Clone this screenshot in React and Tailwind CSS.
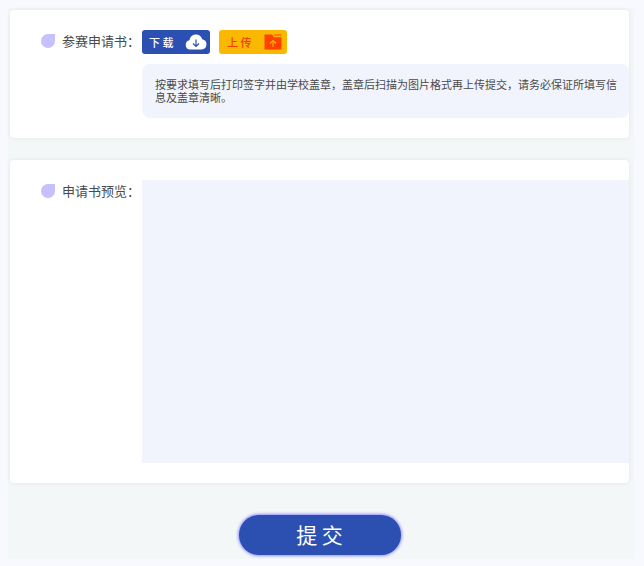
function DropMark() {
  return (
    <span
      aria-hidden="true"
      className="size-3.5 shrink-0 rounded-full rounded-tr-none bg-[#c6c0fd]"
    />
  );
}

function CloudDownloadIcon() {
  return (
    <svg viewBox="0 0 22 16" className="h-4 w-[22px]" aria-hidden="true">
      <path
        d="M5.2 15.5a4.7 4.7 0 0 1-.7-9.3C5.2 2.700 7.700.6 10.900.6c3.100 0 5.500 1.700 6.300 4.600a5.200 5.200 0 0 1-.6 10.300z"
        fill="#fff"
      />
      <path
        d="M11 5.500v7M8 9.500l3 3 3-3"
        fill="none"
        stroke="#2b50b1"
        strokeWidth="1.200"
      />
    </svg>
  );
}

function FolderUploadIcon() {
  return (
    <svg viewBox="0 0 18 16" className="h-4 w-[18px]" aria-hidden="true">
      <path d="M.5.5h7.500l2 2.800h7.500v12.200H.5z" fill="#ff4200" />
      <path d="M10 1h7.500" stroke="#ff4200" strokeWidth="1" />
      <path
        d="M9 13V7M6 9.500l3-3 3 3"
        fill="none"
        stroke="#fbb800"
        strokeWidth="1.100"
      />
    </svg>
  );
}

function Card({ label, children }) {
  return (
    <section className="flex rounded bg-white py-5 pl-[31px] shadow-[0_0_4px_rgba(0,0,0,0.08)]">
      <div className="flex h-[22px] w-[101px] shrink-0 items-center gap-[7px]">
        <DropMark />
        <h2 className="text-[13px] whitespace-nowrap">{label}</h2>
      </div>
      <div className="min-w-0 flex-1">{children}</div>
    </section>
  );
}

export default function App() {
  return (
    <div className="bg-[#f8f9ff] py-2 pr-2.5 pl-2 font-['Noto_Sans_CJK_SC',sans-serif] text-[#4a4a4a]">
      <main className="bg-[#f3f7f8] pt-0.5 pr-[5px] pb-1 pl-0.5">
        <div className="flex flex-col gap-[22px]">
          <Card label="参赛申请书：">
            <div className="flex gap-[9px]">
              <button
                type="button"
                className="flex h-6 w-[68px] items-center justify-between rounded-[3px] bg-[#2b50b1] pr-[3px] pl-[7px] text-[11px] font-medium whitespace-nowrap text-white"
              >
                下 载
                <CloudDownloadIcon />
              </button>
              <button
                type="button"
                className="flex h-6 w-[68px] items-center justify-between rounded-[3px] bg-[#fbb800] pr-[5px] pl-2 text-[11px] font-medium whitespace-nowrap text-[#f53d00]"
              >
                上 传
                <FolderUploadIcon />
              </button>
            </div>
            <p className="mt-2.5 rounded-lg bg-[#f1f4fd] py-3.5 pr-2.5 pl-[13px] text-[11px] leading-[13px]">
              按要求填写后打印签字并由学校盖章，盖章后扫描为图片格式再上传提交，请务必保证所填写信息及盖章清晰。
            </p>
          </Card>
          <Card label="申请书预览：">
            <div className="h-[283px] bg-[#f1f4fd]" />
          </Card>
        </div>
        <div className="mt-8 flex justify-center">
          <button
            type="submit"
            className="h-10 w-[162px] rounded-full bg-[#2b50b1] text-[21px] text-white shadow-[0_0_3px_1px_#8f8cfb]"
          >
            提 交
          </button>
        </div>
      </main>
    </div>
  );
}
